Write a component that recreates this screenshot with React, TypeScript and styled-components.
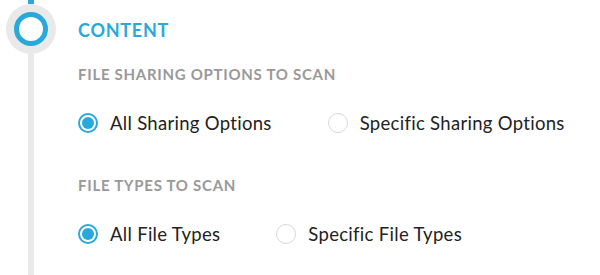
import styled, { createGlobalStyle } from 'styled-components';

const GlobalStyle = createGlobalStyle`
  html, body {
    margin: 0;
    padding: 0;
    background: #ffffff;
  }
  body {
    font-family: Lato, 'Open Sans', sans-serif;
  }
`;

const BLUE = '#29a9d9';

const Page = styled.div`
  display: flex;
  width: 600px;
  height: 275px;
  overflow: hidden;
  background: #fff;
`;

const Timeline = styled.div`
  flex: 0 0 62px;
  display: flex;
  flex-direction: column;
  align-items: center;
`;

const LineTop = styled.div`
  width: 6px;
  height: 4px;
  background: ${BLUE};
`;

const Node = styled.div`
  width: 50px;
  height: 50px;
  box-sizing: border-box;
  border-radius: 50%;
  background: #e9e9e9;
  padding: 8px;
`;

const NodeRing = styled.div`
  width: 100%;
  height: 100%;
  box-sizing: border-box;
  border-radius: 50%;
  border: 5px solid ${BLUE};
  background: #fff;
`;

const LineBottom = styled.div`
  flex: 1;
  width: 6px;
  background: #e9e9e9;
`;

const Content = styled.div`
  flex: 1;
  padding-left: 16px;
  display: flex;
  flex-direction: column;
`;

const Title = styled.h2`
  margin: 20px 0 0;
  font-size: 18px;
  line-height: 20px;
  letter-spacing: 0.75px;
  font-weight: 700;
  color: ${BLUE};
  text-transform: uppercase;
`;

const SectionLabel = styled.div<{ $top: number }>`
  margin-top: ${({ $top }) => $top}px;
  font-size: 15px;
  line-height: 18px;
  letter-spacing: 0.72px;
  font-weight: 700;
  color: #999;
  text-transform: uppercase;
`;

const OptionRow = styled.div`
  margin-top: 29px;
  display: flex;
  align-items: center;
  gap: 56px;
`;

const Option = styled.label`
  display: flex;
  align-items: center;
  gap: 12px;
  font-size: 18.5px;
  line-height: 22px;
  letter-spacing: 0.3px;
  color: #222;
  cursor: pointer;
`;

const Radio = styled.span<{ $checked: boolean }>`
  flex: 0 0 auto;
  width: 20px;
  height: 20px;
  box-sizing: border-box;
  border-radius: 50%;
  border: ${({ $checked }) => ($checked ? `2px solid ${BLUE}` : '1px solid #d9d9d9')};
  background: #fff;
  display: flex;
  align-items: center;
  justify-content: center;

  &::after {
    content: '';
    width: 12px;
    height: 12px;
    border-radius: 50%;
    background: ${BLUE};
    display: ${({ $checked }) => ($checked ? 'block' : 'none')};
  }
`;

const sections = [
  {
    label: 'File Sharing Options to Scan',
    top: 25,
    options: ['All Sharing Options', 'Specific Sharing Options'],
  },
  {
    label: 'File Types to Scan',
    top: 42,
    options: ['All File Types', 'Specific File Types'],
  },
];

export default function App() {
  return (
    <>
      <GlobalStyle />
      <Page>
        <Timeline>
          <LineTop />
          <Node>
            <NodeRing />
          </Node>
          <LineBottom />
        </Timeline>
        <Content>
          <Title>Content</Title>
          {sections.map((section) => (
            <div key={section.label}>
              <SectionLabel $top={section.top}>{section.label}</SectionLabel>
              <OptionRow>
                {section.options.map((opt, i) => (
                  <Option key={opt}>
                    <Radio $checked={i === 0} />
                    {opt}
                  </Option>
                ))}
              </OptionRow>
            </div>
          ))}
        </Content>
      </Page>
    </>
  );
}
